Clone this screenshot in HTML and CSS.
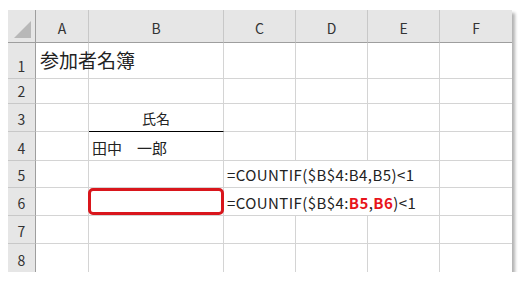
FILE: index.html
```html
<!DOCTYPE html>
<html lang="ja">
<head>
	<meta charset="UTF-8">
	<title>参加者名簿</title>
	<link rel="stylesheet" href="styles.css">
</head>
<body>
	<div class="sheet">
		<div class="corner"><span class="tri"></span></div>
		<div class="col-head">A</div>
		<div class="col-head">B</div>
		<div class="col-head">C</div>
		<div class="col-head">D</div>
		<div class="col-head">E</div>
		<div class="col-head last-col">F</div>

		<div class="row-head">1</div>
		<div class="cell title">参加者名簿</div>
		<div class="cell"></div>
		<div class="cell"></div>
		<div class="cell"></div>
		<div class="cell"></div>
		<div class="cell last-col"></div>

		<div class="row-head">2</div>
		<div class="cell"></div>
		<div class="cell"></div>
		<div class="cell"></div>
		<div class="cell"></div>
		<div class="cell"></div>
		<div class="cell last-col"></div>

		<div class="row-head">3</div>
		<div class="cell"></div>
		<div class="cell center heading">氏名</div>
		<div class="cell"></div>
		<div class="cell"></div>
		<div class="cell"></div>
		<div class="cell last-col"></div>

		<div class="row-head">4</div>
		<div class="cell"></div>
		<div class="cell name">田中　一郎</div>
		<div class="cell"></div>
		<div class="cell"></div>
		<div class="cell"></div>
		<div class="cell last-col"></div>

		<!-- formula text overflows C:E, so no gridlines under it -->
		<div class="row-head">5</div>
		<div class="cell"></div>
		<div class="cell"></div>
		<div class="cell formula">=COUNTIF($B$4:B4,B5)&lt;1</div>
		<div class="cell last-col"></div>

		<div class="row-head">6</div>
		<div class="cell"></div>
		<div class="cell"><span class="ring"></span></div>
		<div class="cell formula">=COUNTIF($B$4:<b class="hl">B5</b>,<b class="hl">B6</b>)&lt;1</div>
		<div class="cell last-col"></div>

		<div class="row-head">7</div>
		<div class="cell"></div>
		<div class="cell"></div>
		<div class="cell"></div>
		<div class="cell"></div>
		<div class="cell"></div>
		<div class="cell last-col"></div>

		<div class="row-head last-row">8</div>
		<div class="cell last-row"></div>
		<div class="cell last-row"></div>
		<div class="cell last-row"></div>
		<div class="cell last-row"></div>
		<div class="cell last-row"></div>
		<div class="cell last-row last-col"></div>
	</div>
</body>
</html>
```

FILE: styles.css
```css
body {
	margin: 0;
	background: #ffffff;
	font-family: "Noto Sans CJK JP", "Noto Sans", sans-serif;
	color: #222222;
}
.sheet {
	display: grid;
	grid-template-columns: 28px 53px 135px 72px 72px 72px 72px;
	grid-template-rows: 33px 36px 25px 28px 29px 27px 28px 28px 28px;
	width: 504px;
	height: 262px;
	margin: 10px 0 0 8px;
	box-shadow: 3px 3px 3px rgba(0, 0, 0, 0.3);
	background: #ffffff;
}
.corner,
.col-head,
.row-head,
.cell {
	box-sizing: border-box;
	min-height: 0;
	border-right: 1px solid #d4d4d4;
	border-bottom: 1px solid #d4d4d4;
}
.corner {
	background: #e6e6e6;
	border-right: 1px solid #9e9e9e;
	border-bottom: 1px solid #9e9e9e;
	position: relative;
}
.tri {
	position: absolute;
	right: 4px;
	bottom: 4px;
	width: 0;
	height: 0;
	border-left: 17px solid transparent;
	border-bottom: 17px solid #b8b8b8;
}
.col-head {
	background: #e6e6e6;
	border-bottom: 1px solid #9e9e9e;
	border-right: 1px solid #c8c8c8;
	font-size: 14px;
	color: #333333;
	display: flex;
	align-items: center;
	justify-content: center;
	padding-top: 3px;
}
.row-head {
	background: #e6e6e6;
	border-right: 1px solid #9e9e9e;
	border-bottom: 1px solid #c8c8c8;
	font-size: 14px;
	color: #333333;
	display: flex;
	align-items: flex-end;
	justify-content: center;
	padding-bottom: 2px;
}
.cell {
	font-size: 14px;
	display: flex;
	align-items: flex-end;
	padding: 0 0 3px 3px;
	white-space: nowrap;
	position: relative;
}
.last-col {
	border-right: none;
}
.last-row {
	border-bottom: none;
}
.title {
	font-size: 19px;
	padding-bottom: 5px;
	padding-left: 4px;
}
.name {
	font-size: 15px;
	padding-bottom: 2px;
}
.heading {
	border-bottom: 1px solid #000000;
}
.center {
	justify-content: center;
	padding-left: 0;
}
.formula {
	grid-column: span 3;
	font-size: 15px;
	padding-left: 3px;
	padding-bottom: 2px;
	letter-spacing: 0.42px;
}
.hl {
	color: #e8141b;
	font-weight: bold;
}
.ring {
	position: absolute;
	left: -1px;
	top: 0;
	right: -1px;
	bottom: 0;
	border: 3px solid #d9161c;
	border-radius: 5px;
}
```
